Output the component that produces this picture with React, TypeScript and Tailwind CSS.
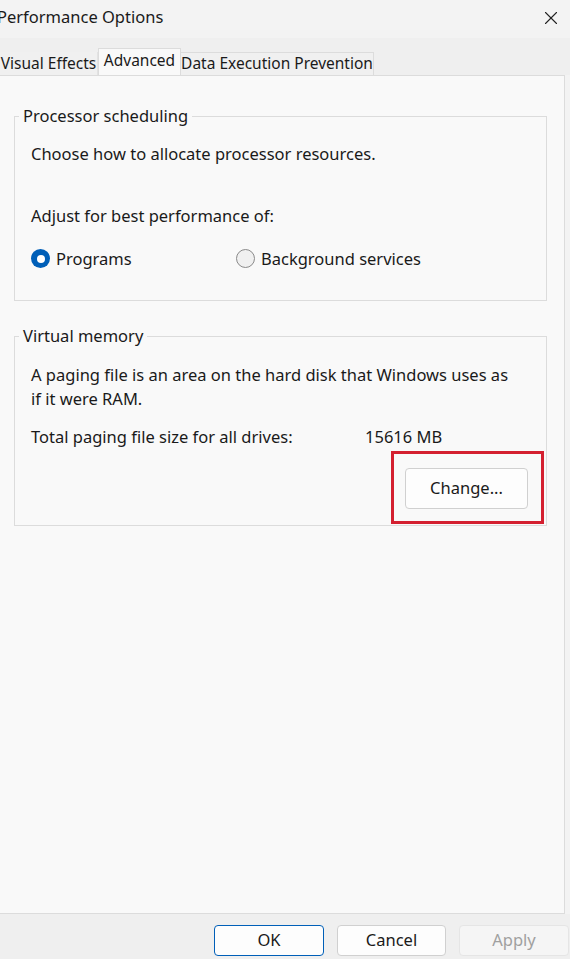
import { X } from 'lucide-react';

const font = { fontFamily: '"Noto Sans", "Open Sans", sans-serif' };

const Radio = ({ checked, label }: { checked?: boolean; label: string }) => (
  <label className="flex items-center gap-[6px]">
    {checked ? (
      <span className="w-[19px] h-[19px] rounded-full bg-[#005fb8] flex items-center justify-center">
        <span className="w-[8px] h-[8px] rounded-full bg-white" />
      </span>
    ) : (
      <span className="w-[19px] h-[19px] rounded-full border border-[#8a8a8a] bg-[#f0f0f0]" />
    )}
    <span>{label}</span>
  </label>
);

export default function App() {
  return (
    <div
      className="w-[570px] h-[959px] flex flex-col bg-[#f3f3f3] text-[#1a1a1a] text-[16.5px] overflow-hidden"
      style={font}
    >
      {/* title bar */}
      <div className="h-[38px] flex items-center justify-between shrink-0">
        <span className="ml-[-3px] text-[16.5px] mb-[3px] whitespace-nowrap">Performance Options</span>
        <X className="mr-[8px] mb-[3px] w-[22px] h-[22px] text-[#222]" strokeWidth={1.2} />
      </div>

      {/* tabs */}
      <div className="h-[37px] flex items-end bg-[#efefef] shrink-0 whitespace-nowrap text-[15.5px]">
        <div className="h-[23px] w-[98px] flex items-center justify-center bg-[#f0f0f0] border-r border-[#e2e2e2] leading-none">
          Visual Effects
        </div>
        <div className="h-[27px] w-[83px] flex items-center justify-center bg-[#f9f9f9] border border-b-0 border-[#dcdcdc] leading-none pb-[3px]">
          Advanced
        </div>
        <div className="h-[23px] w-[193px] flex items-center justify-center bg-[#f0f0f0] border-t border-r border-[#dcdcdc] leading-none">
          Data Execution Prevention
        </div>
      </div>

      {/* panel */}
      <div className="flex-1 w-[565px] bg-[#f9f9f9] border-r border-t border-b border-[#dcdcdc] pl-[14px] pr-[17px] pt-[29px]">
        <fieldset className="border border-[#dcdcdc] h-[196px] px-[16px]">
          <legend className="ml-[-12px] px-[4px] leading-[22px]">Processor scheduling</legend>
          <p className="mt-[15px]">Choose how to allocate processor resources.</p>
          <p className="mt-[37px]">Adjust for best performance of:</p>
          <div className="mt-[18px] flex">
            <div className="w-[205px]">
              <Radio checked label="Programs" />
            </div>
            <Radio label="Background services" />
          </div>
        </fieldset>

        <fieldset className="mt-[24px] border border-[#dcdcdc] h-[201px] px-[16px]">
          <legend className="ml-[-12px] px-[4px] leading-[22px]">Virtual memory</legend>
          <p className="mt-[16px] leading-[24px]">
            A paging file is an area on the hard disk that Windows uses as
            <br />
            if it were RAM.
          </p>
          <div className="mt-[14px] flex">
            <span className="w-[334px]">Total paging file size for all drives:</span>
            <span>15616 MB</span>
          </div>
          <div className="flex justify-end mr-[-14px] mt-[1px]">
            <div className="border-[3px] border-[#d42030] w-[153px] h-[73px] flex items-start pl-[11px] pt-[14px]">
              <button className="w-[123px] h-[41px] rounded-[4px] border border-[#d0d0d0] bg-[#fdfdfd]">
                Change...
              </button>
            </div>
          </div>
        </fieldset>
      </div>

      {/* footer */}
      <div className="h-[45px] shrink-0 bg-[#efefef] flex items-start gap-[13px] pl-[214px] pt-[11px]">
        <button className="w-[110px] h-[31px] rounded-[4px] border border-[#005fb8] bg-[#fdfdfd]">OK</button>
        <button className="w-[109px] h-[31px] rounded-[4px] border border-[#d0d0d0] bg-[#fdfdfd]">Cancel</button>
        <button className="w-[110px] h-[31px] rounded-[4px] border border-[#e5e5e5] bg-[#f5f5f5] text-[#a0a0a0]">Apply</button>
      </div>
    </div>
  );
}
